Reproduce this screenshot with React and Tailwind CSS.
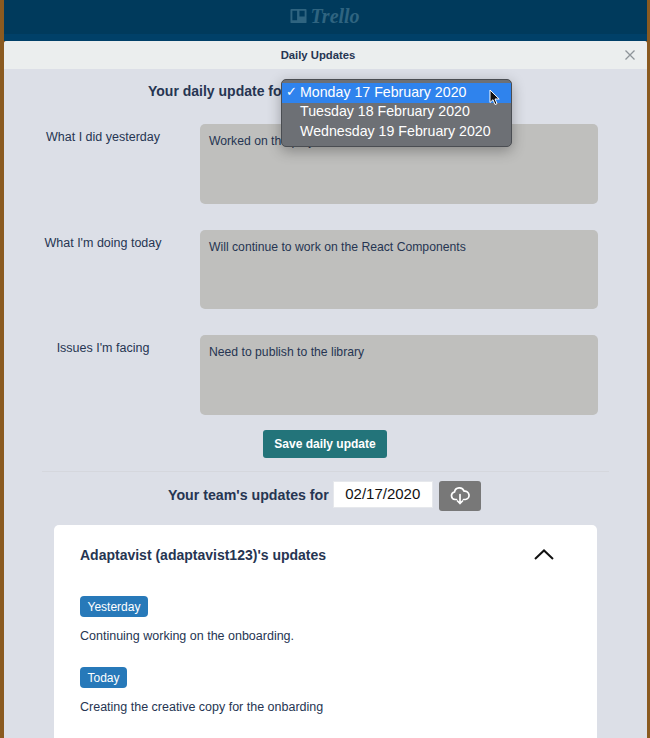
import React from "react";

function Row({ label, text }) {
  return (
    <div className="flex items-start">
      <div className="w-[122px] shrink-0 pt-[5px] text-center text-[12.500px] leading-[16px] text-[#263552] whitespace-nowrap">{label}</div>
      <div className="ml-[36px] mr-[10px] w-[398px] h-[79.500px] rounded-[5px] bg-[#bfbfbd] px-[9px] py-[8px] text-[12.200px] leading-[18px] text-[#263552] whitespace-nowrap overflow-hidden">{text}</div>
    </div>
  );
}

export default function App() {
  return (
    <div className="relative h-[738px] w-[650px] overflow-hidden bg-[#8a5a20] font-['Liberation_Sans',Arial,sans-serif]">
      <div className="ml-[4px] mr-[3px] h-[738px] flex flex-col">
        {/* Top bar */}
        <div className="h-[41px] shrink-0 flex items-start justify-center bg-[#003a5c] border-b-[7px] border-[#004068]">
          <div className="flex items-center gap-[3px] pt-[4px] pr-[1px]">
            <svg width="17" height="16" viewBox="0 0 18 16" className="shrink-0">
              <path fillRule="evenodd" fill="#2f6480" d="M1.500 0.500h15a1 1 0 0 1 1 1v13a1 1 0 0 1-1 1h-15a1 1 0 0 1-1-1v-13a1 1 0 0 1 1-1zM2.500 2.500v10h5v-10zM10 2.500v6h5.500v-6z" />
            </svg>
            <span className="font-['Liberation_Serif',serif] italic font-bold text-[20px] leading-[24px] text-[#2f6480]">Trello</span>
          </div>
        </div>

        {/* Modal */}
        <div className="flex-1 rounded-t-[3px] bg-[#dcdfe7] overflow-hidden">
          <div className="relative h-[28px] flex items-center justify-center pr-[15px] bg-[#ebeeee] text-[11.300px] font-bold text-[#263552]">
            Daily Updates
            <svg width="12" height="12" viewBox="0 0 12 12" className="absolute right-[11px] top-[8px]">
              <path d="M1.500 1.500l9 9M10.500 1.500l-9 9" stroke="#8e9499" strokeWidth="1.300" fill="none" />
            </svg>
          </div>

          <div className="mx-[38px] flex flex-col">
            <div className="h-[55px] pt-[13px] pl-[106px] text-[14px] leading-[18px] font-bold text-[#263552] whitespace-nowrap">Your daily update for</div>

            <div className="flex flex-col gap-[26px]">
              <Row label="What I did yesterday" text="Worked on the project" />
              <Row label="What I'm doing today" text="Will continue to work on the React Components" />
              <Row label="Issues I'm facing" text="Need to publish to the library" />
            </div>

            <div className="mt-[15.500px] flex justify-center pr-[1px]">
              <button className="h-[28px] w-[124px] rounded-[3px] bg-[#23747a] text-[12px] font-bold text-white">Save daily update</button>
            </div>

            <div className="mt-[13px] border-t border-[#d5d7dd]" />

            <div className="mt-[9px] flex items-start pl-[126px]">
              <span className="pt-[5px] text-[14.200px] leading-[18px] font-bold text-[#263552] whitespace-nowrap">Your team's updates for</span>
              <div className="ml-[4px] h-[27px] w-[100px] flex items-center justify-center bg-white border border-[#e6e8ec] text-[15px] text-[#111]">02/17/2020</div>
              <button className="ml-[6px] h-[30px] w-[42px] flex items-center justify-center rounded-[3px] bg-[#787878]">
                <svg width="20" height="18" viewBox="0 0 20 18" fill="none" stroke="#fff" strokeWidth="1.700" strokeLinecap="round" strokeLinejoin="round">
                  <path d="M6.500 12.500H5a3.800 3.800 0 0 1-.5-7.500 5 5 0 0 1 9.600-.8 4.200 4.200 0 0 1 1.400 8.300h-2" />
                  <path d="M10 7.500v9M7.500 14l2.500 2.500 2.500-2.500" />
                </svg>
              </button>
            </div>

            <div className="mt-[14px] ml-[12px] mr-[12px] h-[260px] rounded-t-[5px] bg-white">
              <div className="flex items-start justify-between pl-[26px] pr-[43px] pt-[21px]">
                <span className="text-[14px] leading-[18px] font-bold text-[#263552] whitespace-nowrap">Adaptavist (adaptavist123)'s updates</span>
                <svg width="20" height="11" viewBox="0 0 20 11" fill="none" stroke="#111" strokeWidth="2" className="mt-[3px]">
                  <path d="M1 10l9-8.500 9 8.500" />
                </svg>
              </div>
              <div className="flex flex-col items-start pl-[26px] pt-[32px]">
                <span className="flex h-[21px] w-[68px] items-center justify-center rounded-[4px] bg-[#2779b9] text-[12px] text-white">Yesterday</span>
                <p className="mt-[11px] text-[12.500px] leading-[16px] text-[#263552]">Continuing working on the onboarding.</p>
                <span className="mt-[23px] flex h-[21px] w-[47px] items-center justify-center rounded-[4px] bg-[#2779b9] text-[12px] text-white">Today</span>
                <p className="mt-[11px] text-[12.500px] leading-[16px] text-[#263552]">Creating the creative copy for the onbarding</p>
              </div>
            </div>
          </div>
        </div>
      </div>

      {/* Open select menu */}
      <div className="absolute left-[281px] top-[79px] w-[231px] h-[68px] rounded-[5px] border border-[#4a4d52] bg-[#6d7075] pt-[3px] text-[14.200px] leading-[19.500px] text-white shadow-[0_4px_14px_rgba(0,0,0,0.3)] whitespace-nowrap">
        <div className="relative h-[20px] bg-[#2f83ed] pl-[18px] leading-[18px]">
          <span className="absolute left-[4px] top-0 text-[13px]">✓</span>
          Monday 17 February 2020
        </div>
        <div className="-mt-[1px] pl-[18px]">Tuesday 18 February 2020</div>
        <div className="pl-[18px]">Wednesday 19 February 2020</div>
      </div>

      {/* Cursor */}
      <svg width="12" height="17" viewBox="0 0 12 17" className="absolute left-[489px] top-[89px]">
        <path d="M1 1v12.500l3-2.800 2 4.800 2-.9-2-4.600h4.200z" fill="#111" stroke="#fff" strokeWidth="1" />
      </svg>
    </div>
  );
}
